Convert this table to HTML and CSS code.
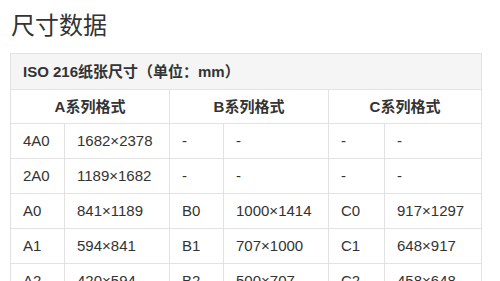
FILE: index.html
```html
<!DOCTYPE html>
<html lang="zh">
<head>
<meta charset="utf-8">
<link rel="stylesheet" href="styles.css">
</head>
<body>
<h1 class="title">尺寸数据</h1>
<table class="sizes">
  <colgroup>
    <col class="c-name"><col class="c-size">
    <col class="c-name"><col class="c-size">
    <col class="c-name3"><col class="c-size3">
  </colgroup>
  <tr class="cap-row"><td colspan="6">ISO 216纸张尺寸（单位：mm）</td></tr>
  <tr class="head-row"><th colspan="2">A系列格式</th><th colspan="2">B系列格式</th><th colspan="2">C系列格式</th></tr>
  <tr><td>4A0</td><td>1682×2378</td><td>-</td><td>-</td><td>-</td><td>-</td></tr>
  <tr><td>2A0</td><td>1189×1682</td><td>-</td><td>-</td><td>-</td><td>-</td></tr>
  <tr><td>A0</td><td>841×1189</td><td>B0</td><td>1000×1414</td><td>C0</td><td>917×1297</td></tr>
  <tr><td>A1</td><td>594×841</td><td>B1</td><td>707×1000</td><td>C1</td><td>648×917</td></tr>
  <tr><td>A2</td><td>420×594</td><td>B2</td><td>500×707</td><td>C2</td><td>458×648</td></tr>
  <tr><td>A3</td><td>297×420</td><td>B3</td><td>353×500</td><td>C3</td><td>324×458</td></tr>
</table>
</body>
</html>
```
FILE: styles.css
```css
html, body {
  margin: 0;
  padding: 0;
  background: #fff;
}
body {
  padding: 0 10px;
  font-family: "Liberation Sans", "Noto Sans CJK SC", sans-serif;
  color: #333;
}
.title {
  margin: 7px 0 12px 1px;
  font-family: "Noto Sans CJK SC", sans-serif;
  font-size: 24px;
  line-height: 34px;
  font-weight: 400;
  color: #333;
}
.sizes {
  width: 471px;
  table-layout: fixed;
  border-collapse: collapse;
  font-size: 15px;
}
.c-name { width: 54px; }
.c-size { width: 105px; }
.c-name3 { width: 56px; }
.c-size3 { width: 97px; }
.sizes td, .sizes th {
  border: 1px solid #e2e2e2;
  padding: 0 12px;
  height: 34px;
  line-height: 20px;
  text-align: left;
  white-space: nowrap;
  font-weight: 400;
}
.cap-row td {
  height: 35px;
  background: #f5f5f5;
  font-weight: 700;
}
.head-row th {
  height: 33px;
  text-align: center;
  font-weight: 700;
}
```
